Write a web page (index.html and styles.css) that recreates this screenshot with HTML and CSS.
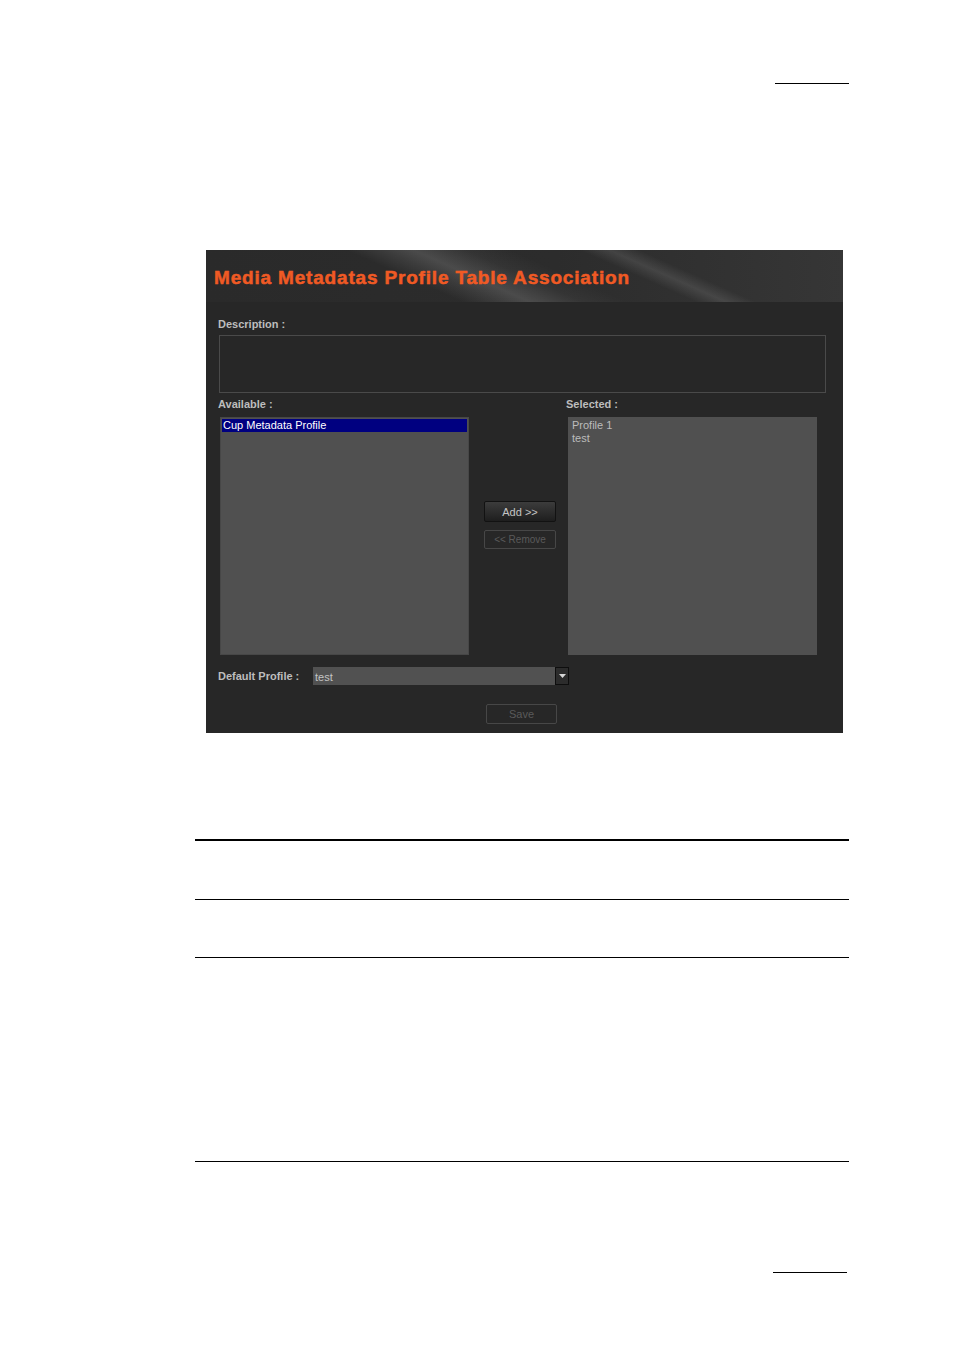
FILE: index.html
```html
<!DOCTYPE html>
<html>
<head>
<meta charset="utf-8">
<link rel="stylesheet" href="styles.css">
</head>
<body>
<div class="page">
  <div class="rule-short top"></div>
  <div class="dialog">
    <div class="dlg-header">
      <h1 class="dlg-title">Media Metadatas Profile Table Association</h1>
    </div>
    <div class="dlg-body">
      <div class="lbl lbl-desc">Description :</div>
      <div class="desc-box"></div>
      <div class="lists">
        <div class="lbl">Available :</div>
        <div></div>
        <div class="lbl">Selected :</div>
        <div class="listbox">
          <div class="item selected">Cup Metadata Profile</div>
        </div>
        <div class="mid">
          <div class="btn btn-add">Add &gt;&gt;</div>
          <div class="btn btn-disabled btn-remove">&lt;&lt; Remove</div>
        </div>
        <div class="listbox right">
          <div class="item">Profile 1</div>
          <div class="item">test</div>
        </div>
      </div>
      <div class="default-row">
        <div class="lbl lbl-default">Default Profile :</div>
        <div class="combo">
          <div class="combo-value">test</div>
          <div class="combo-arrow"><svg width="7" height="4" viewBox="0 0 7 4"><path d="M0 0H7L3.5 4Z" fill="#d8d8d8"/></svg></div>
        </div>
      </div>
      <div class="save-row">
        <div class="btn btn-disabled btn-save">Save</div>
      </div>
    </div>
  </div>
  <div class="rule thick r1"></div>
  <div class="rule r2"></div>
  <div class="rule r3"></div>
  <div class="rule r4"></div>
  <div class="rule-short bottom"></div>
</div>
</body>
</html>
```

FILE: styles.css
```css
html, body {
  margin: 0;
  padding: 0;
  background: #ffffff;
}
.page {
  width: 954px;
  height: 1350px;
  display: flex;
  flex-direction: column;
  align-items: flex-start;
}
.rule-short {
  height: 1px;
  background: #000;
  width: 74px;
}
.rule-short.top {
  margin-top: 83px;
  margin-left: 775px;
}
.rule-short.bottom {
  margin-top: 110px;
  margin-left: 773px;
}
.rule {
  height: 1px;
  background: #000;
  width: 654px;
  margin-left: 195px;
}
.rule.thick { height: 2px; }
.r1 { margin-top: 106px; }
.r2 { margin-top: 58px; }
.r3 { margin-top: 57px; }
.r4 { margin-top: 203px; }

.dialog {
  margin-top: 166px;
  margin-left: 206px;
  width: 637px;
  height: 483px;
  background: #272727;
  font-family: "Liberation Sans", "DejaVu Sans", sans-serif;
  font-size: 11px;
  color: #bdbdbd;
  display: flex;
  flex-direction: column;
}
.dlg-header {
  height: 52px;
  box-sizing: border-box;
  display: flex;
  align-items: center;
  padding-left: 8px;
  padding-top: 3px;
  background:
    linear-gradient(24deg, rgba(255,255,255,0) 65%, rgba(255,255,255,0.10) 69%, rgba(255,255,255,0) 73%),
    linear-gradient(24deg, rgba(255,255,255,0) 34%, rgba(255,255,255,0.08) 39%, rgba(255,255,255,0.15) 43%, rgba(255,255,255,0.04) 50%, rgba(255,255,255,0) 56%),
    linear-gradient(90deg, #2a2a2a 0%, #2c2c2c 55%, #363636 100%);
}
.dlg-title {
  margin: 0;
  font-family: "Liberation Sans", Arial, sans-serif;
  font-weight: bold;
  font-size: 19px;
  letter-spacing: 0.82px;
  color: #f05a24;
  line-height: 20px;
  -webkit-text-stroke: 0.5px #f05a24;
}
.dlg-body {
  flex: 1;
  padding: 15px 0 0 12px;
  display: flex;
  flex-direction: column;
  align-items: flex-start;
}
.lbl {
  font-weight: bold;
  line-height: 14px;
  color: #bdbdbd;
}
.desc-box {
  margin-top: 4px;
  margin-left: 1px;
  width: 605px;
  height: 56px;
  border: 1px solid #4a4a4a;
}
.lists {
  margin-top: 4px;
  display: grid;
  grid-template-columns: 252px 96px 252px;
  grid-template-rows: 14px 238px;
  row-gap: 6px;
}
.listbox {
  margin-left: 2px;
  width: 249px;
  height: 238px;
  background: #505050;
  box-sizing: border-box;
  border: 1px solid #474747;
  padding: 1px;
  color: #c4c4c4;
  line-height: 13px;
}
.listbox.right {
  padding-left: 2px;
  padding-top: 1px;
  color: #bcbcbc;
  border-color: #505050;
}
.item {
  padding-left: 1px;
  height: 13px;
}
.item.selected {
  background: #000080;
  color: #ffffff;
}
.mid {
  display: flex;
  flex-direction: column;
  padding-top: 84px;
  padding-left: 14px;
  gap: 8px;
}
.btn {
  width: 72px;
  box-sizing: border-box;
  display: flex;
  align-items: center;
  justify-content: center;
  border-radius: 2px;
  font-size: 11px;
}
.btn-add {
  height: 21px;
  background: linear-gradient(#3c3c3c, #1e1e1e);
  border: 1px solid #121212;
  color: #c4c4c4;
}
.btn-disabled {
  border: 1px solid #474747;
  color: #5a5a5a;
  background: transparent;
}
.btn-remove {
  height: 19px;
  font-size: 10px;
}
.default-row {
  margin-top: 12px;
  display: flex;
  align-items: center;
}
.lbl-default {
  width: 95px;
}
.combo {
  display: flex;
  height: 18px;
}
.combo-value {
  width: 242px;
  background: #515151;
  color: #c4c4c4;
  padding-left: 2px;
  box-sizing: border-box;
  line-height: 20px;
}
.combo-arrow {
  width: 14px;
  box-sizing: border-box;
  background: #2c2c2c;
  border: 1px solid #0e0e0e;
  display: flex;
  align-items: center;
  justify-content: center;
}
.save-row {
  margin-top: 19px;
  padding-left: 268px;
}
.btn-save {
  height: 20px;
  width: 71px;
}
```
